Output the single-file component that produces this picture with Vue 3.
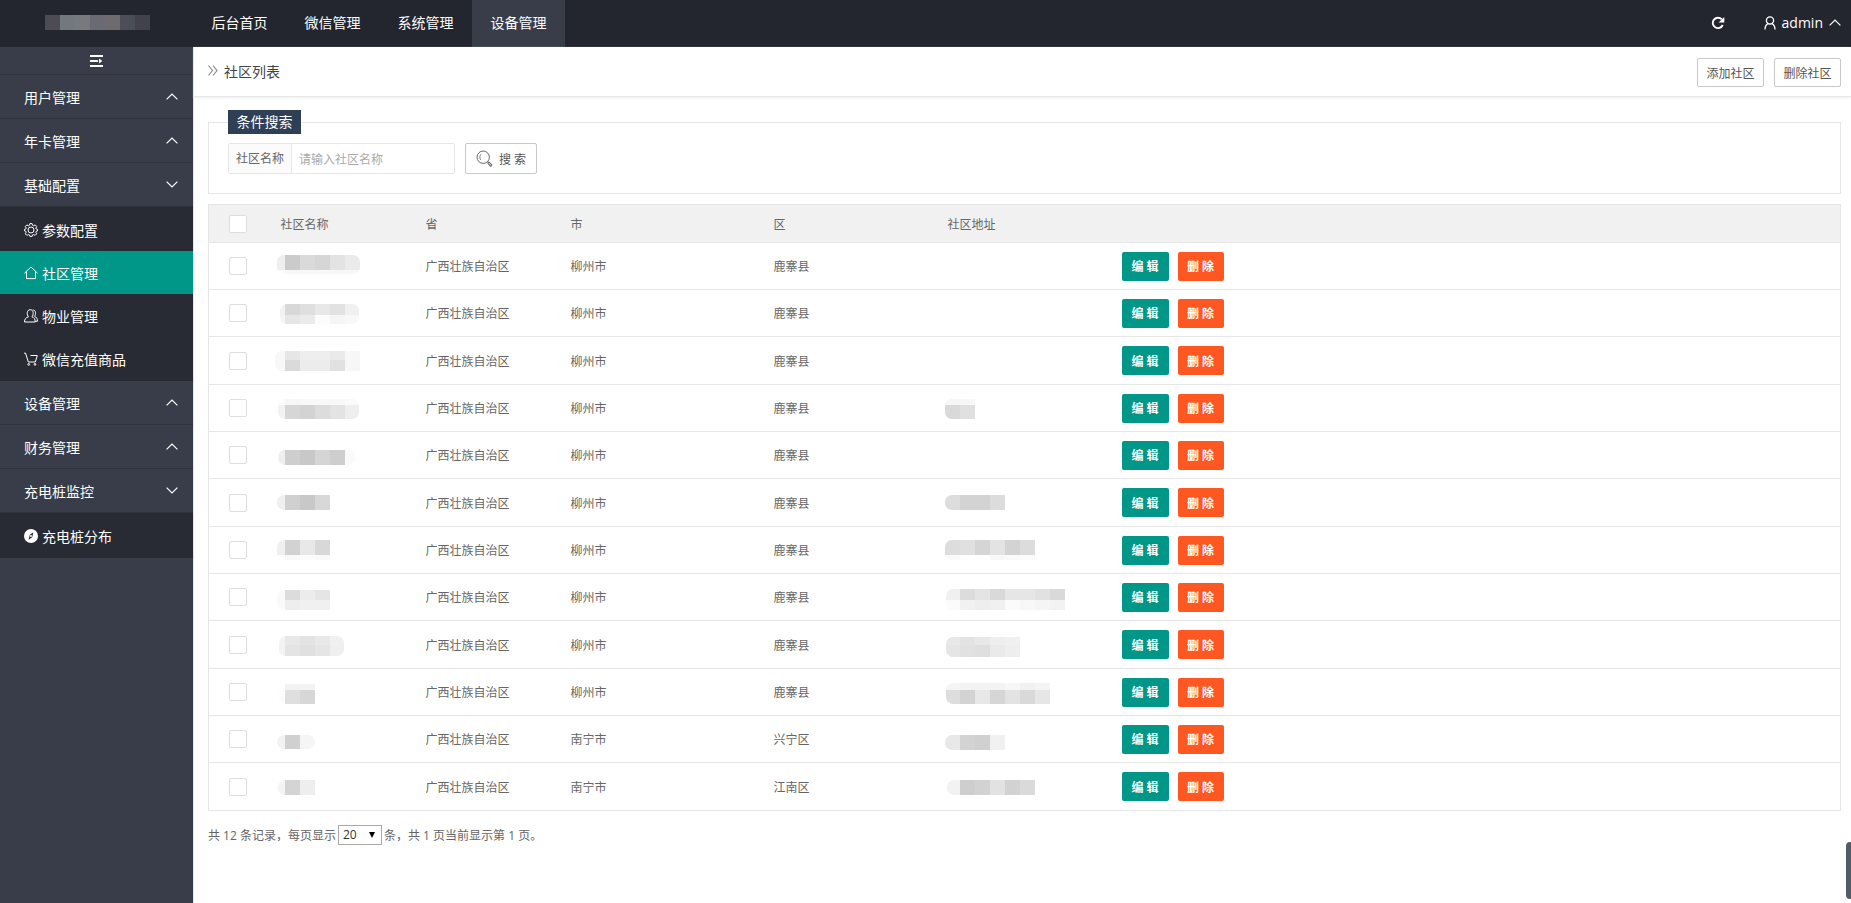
<script setup>
import { ref } from 'vue'

const tabs = ['后台首页', '微信管理', '系统管理', '设备管理']
const activeTab = ref(3)

const menu = [
  { title: '用户管理' },
  { title: '年卡管理' },
  {
    title: '基础配置',
    children: [
      { title: '参数配置', icon: 'gear' },
      { title: '社区管理', icon: 'home', active: true },
      { title: '物业管理', icon: 'users' },
      { title: '微信充值商品', icon: 'cart' }
    ]
  },
  { title: '设备管理' },
  { title: '财务管理' },
  { title: '充电桩监控', children: [{ title: '充电桩分布', icon: 'compass' }] }
]

const logoCells = ['#4d4c54', '#73777f', '#78797f', '#6a6a74', '#6e6a6e', '#4b4e58', '#42424c']

// A masked value: left edge, clip width, and bands of [top, bottom, grey levels per 15px cell]
const mask = (x, w, ...bands) => ({ x, w, top: bands[0][0], bottom: bands[bands.length - 1][1], bands })

const gx = '广西壮族自治区'
const rows = [
  { name: mask(10, 83, [12, 27, 'ef cb da d6 e3 eb'], [27, 31, 'fc f8 f8 f8 f8 f8']), city: '柳州市', area: '鹿寨县' },
  { name: mask(13, 79, [14, 25, 'f2 d8 df e8 e2 f0'], [25, 34, 'f5 e6 eb fc f5 f8']), city: '柳州市', area: '鹿寨县' },
  { name: mask(8, 100, [14, 23, 'f8 e6 ee ee ea f7'], [23, 34, 'f8 da ec ec e1 f7']), city: '柳州市', area: '鹿寨县' },
  { name: mask(11, 81, [14, 20, 'fc f7 f8 f8 f8 fa'], [20, 34, 'f2 d6 d3 dc e3 ee']), city: '柳州市', area: '鹿寨县', addr: mask(11, 60, [14, 20, 'f6 f7'], [20, 34, 'd9 e0']) },
  { name: mask(11, 77, [18, 33, 'ef ce c8 d5 ce fa']), city: '柳州市', area: '鹿寨县' },
  { name: mask(10, 83, [16, 31, 'f0 d0 c8 d8']), city: '柳州市', area: '鹿寨县', addr: mask(11, 90, [16, 31, 'dd d3 d3 dc']) },
  { name: mask(10, 83, [13, 28, 'f0 d2 e8 d8'], [28, 33, 'ff f9 fc f9']), city: '柳州市', area: '鹿寨县', addr: mask(11, 120, [13, 28, 'dd e0 d5 e3 d3 dc'], [28, 33, 'f9 fe fe f8 fa fc']) },
  { name: mask(10, 83, [16, 26, 'fa dc ec e5'], [26, 36, 'fa ee f0 f0']), city: '柳州市', area: '鹿寨县', addr: mask(12, 150, [15, 26, 'f0 dc e4 d9 e6 e6 e1 d9'], [26, 36, 'fb f1 ee f0 fb f8 f5 f2']) },
  { name: mask(12, 65, [15, 24, 'f3 e8 e3 e8 f0'], [24, 35, 'f3 e4 e0 e5 ef']), city: '柳州市', area: '鹿寨县', addr: mask(12, 110, [16, 24, 'e8 e3 e8 ee f0'], [24, 36, 'e5 e1 df ea ee']) },
  { name: mask(12, 70, [15, 21, 'ff f3 f3'], [21, 35, 'fc df d7']), city: '柳州市', area: '鹿寨县', addr: mask(12, 130, [14, 21, 'f5 f3 f3 f3 f7 f1 f4'], [21, 35, 'dd d3 e8 d6 e3 d9 e6']) },
  { name: mask(10, 38, [19, 33, 'f2 d0 f5']), city: '南宁市', area: '兴宁区', addr: mask(11, 90, [19, 34, 'e8 d3 d0 f1']) },
  { name: mask(11, 60, [17, 32, 'f4 d4 ee']), city: '南宁市', area: '江南区', addr: mask(13, 110, [17, 32, 'f2 ce d2 e2 d2 da']) }
]

function cellRects(m, gridStart) {
  return m.bands.flatMap(([y1, y2, levels]) =>
    levels.split(' ').map((g, i) => ({ x: gridStart + i * 15, y: y1, h: y2 - y1, fill: '#' + g + g + g }))
  )
}
</script>

<template>
  <div class="layout">
    <header class="topbar">
      <div class="logo">
        <svg width="105" height="15" aria-hidden="true">
          <rect v-for="(c, i) in logoCells" :key="i" :x="i * 15" y="0" width="15" height="15" :fill="c" />
        </svg>
      </div>
      <nav class="tabs">
        <a v-for="(t, i) in tabs" :key="t" href="#" :class="{ on: i === activeTab }" @click.prevent="activeTab = i">{{ t }}</a>
      </nav>
      <div class="tools">
        <button class="refresh" type="button" aria-label="刷新">
          <svg width="14" height="14" viewBox="0 0 14 14">
            <path d="M11.7 9A5.200 5.200 0 1 1 10.800 3.400" fill="none" stroke="#fff" stroke-width="1.900" />
            <path d="M13.300 1v5.600H7.700z" fill="#fff" />
          </svg>
        </button>
        <button class="user" type="button">
          <svg width="12" height="14" viewBox="0 0 12 14" fill="none" stroke="#fff" stroke-width="1.300">
            <circle cx="6" cy="4.400" r="3.600" />
            <path d="M1 13.400c0-3 1.200-4.900 3.100-5.800M11 13.400c0-3-1.200-4.900-3.100-5.800" />
          </svg>
          <span>admin</span>
          <svg width="12" height="7" viewBox="0 0 12 7" fill="none" stroke="#fff" stroke-width="1.200"><path d="M.6 6.400 6 1l5.400 5.400" /></svg>
        </button>
      </div>
    </header>

    <div class="body">
      <aside class="side">
        <button class="fold" type="button" aria-label="收起菜单">
          <svg width="13" height="12" viewBox="0 0 13 12" fill="#fff">
            <path d="M0 0h13v2H0zM0 5h8v2H0zM0 10h13v2H0zM9 3.400 12.400 6 9 8.600z" />
          </svg>
        </button>
        <ul class="menu">
          <li v-for="m in menu" :key="m.title">
            <a class="parent" href="#" @click.prevent>
              <span>{{ m.title }}</span>
              <svg width="12" height="7" viewBox="0 0 12 7" fill="none" stroke="#fff" stroke-width="1.200">
                <path :d="m.children ? 'M.6.6 6 6 11.400.6' : 'M.6 6.400 6 1l5.400 5.400'" />
              </svg>
            </a>
            <ul v-if="m.children" class="sub">
              <li v-for="c in m.children" :key="c.title">
                <a href="#" :class="{ current: c.active }" @click.prevent>
                  <svg width="14" height="14" viewBox="0 0 14 14" fill="none" stroke="#fff" stroke-width="1">
                    <template v-if="c.icon === 'gear'">
                      <path d="M5.900.6h2.200l.5 1.800.9.4 1.600-.9 1.600 1.600-.9 1.600.4.900 1.300.3v1.600l-1.300.4-.4.900.9 1.600-1.600 1.600-1.600-.9-.9.4-.5 1.500H5.900l-.5-1.500-.9-.4-1.600.9-1.600-1.600.9-1.600-.4-.9L.5 7.900V6.300l1.300-.3.4-.9-.9-1.600 1.600-1.600 1.600.9.900-.4z" />
                      <circle cx="7" cy="7" r="3" />
                    </template>
                    <path v-else-if="c.icon === 'home'" d="M.4 7.200 7 1l6.600 6.200M2.500 5.600v7h9v-7" />
                    <template v-else-if="c.icon === 'users'">
                      <path d="M4.500 7.800C2.500 6 2.700.7 6.200.7s3.700 5.300 1.700 7.100c2.300.8 3.300 2.200 3.300 5.200H.5c0-3 1.400-4.400 4-5.200z" />
                      <path d="M8.700 1c3.300-.2 3.600 4.300 1.800 6.300 2.100.9 3 2.300 3 5H11.200" />
                    </template>
                    <template v-else-if="c.icon === 'cart'">
                      <path d="M0 1.200h1.600L4.300 10h7L13.300 3.500H6.500" />
                      <circle cx="4.700" cy="12.400" r=".9" />
                      <circle cx="11" cy="12.400" r=".9" />
                    </template>
                    <template v-else>
                      <circle cx="7" cy="7" r="7" fill="#fff" stroke="none" />
                      <path d="M9.400 3.200 8.200 8.200 4.600 10.800 5.800 5.800z" fill="#282b33" stroke="none" />
                      <circle cx="7" cy="7" r="1" fill="#fff" stroke="none" />
                    </template>
                  </svg>
                  <span>{{ c.title }}</span>
                </a>
              </li>
            </ul>
          </li>
        </ul>
      </aside>

      <main class="main">
        <div class="titlebar">
          <h1>
            <svg width="10" height="11" viewBox="0 0 10 11" fill="none" stroke="#8c8c8c" stroke-width="1.200">
              <path d="M.5.500 4.500 5.500.5 10.500M5 .5l4 5-4 5" />
            </svg>
            <span>社区列表</span>
          </h1>
          <div class="actions">
            <button class="plain add" type="button">添加社区</button>
            <button class="plain add" type="button">删除社区</button>
          </div>
        </div>

        <div class="content">
          <form class="search" @submit.prevent>
            <h2>条件搜索</h2>
            <div class="fields">
              <div class="group">
                <label for="community">社区名称</label>
                <input id="community" type="text" placeholder="请输入社区名称" />
              </div>
              <button class="plain find" type="submit">
                <svg width="17" height="17" viewBox="0 0 17 17" fill="none" stroke="#666">
                  <circle cx="7.200" cy="7.200" r="6.200" />
                  <path d="M4.600 10C3.400 7.800 3.700 5.500 5 4.200" stroke-width=".8" />
                  <path d="M11.700 11.900 12.600 12.800" />
                  <path d="M12.900 13.100 14.800 15.200" stroke-width="2.800" stroke-linecap="round" />
                  <path d="M13 13.200 14.700 15.100" stroke="#fff" stroke-width=".9" stroke-linecap="round" />
                </svg>
                <span>搜 索</span>
              </button>
            </div>
          </form>

          <table class="list">
            <colgroup>
              <col class="c-check" /><col class="c-name" /><col class="c-name" /><col class="c-city" />
              <col class="c-area" /><col class="c-area" /><col />
            </colgroup>
            <thead>
              <tr>
                <th class="check"><input type="checkbox" aria-label="全选" /></th>
                <th>社区名称</th>
                <th>省</th>
                <th>市</th>
                <th>区</th>
                <th>社区地址</th>
                <th></th>
              </tr>
            </thead>
            <tbody>
              <tr v-for="(r, i) in rows" :key="i">
                <td class="check"><input type="checkbox" aria-label="选择" /></td>
                <td class="masked">
                  <svg width="140" height="40">
                    <clipPath :id="'n' + i"><rect :x="r.name.x" :y="r.name.top" :width="r.name.w" :height="r.name.bottom - r.name.top" rx="7" /></clipPath>
                    <g :clip-path="`url(#n${i})`">
                      <rect v-for="(c, k) in cellRects(r.name, 3)" :key="k" :x="c.x" :y="c.y" width="15" :height="c.h" :fill="c.fill" />
                    </g>
                  </svg>
                </td>
                <td>{{ gx }}</td>
                <td>{{ r.city }}</td>
                <td>{{ r.area }}</td>
                <td class="masked">
                  <svg v-if="r.addr" width="160" height="40">
                    <clipPath :id="'a' + i"><rect :x="r.addr.x" :y="r.addr.top" :width="r.addr.w" :height="r.addr.bottom - r.addr.top" rx="7" /></clipPath>
                    <g :clip-path="`url(#a${i})`">
                      <rect v-for="(c, k) in cellRects(r.addr, 11)" :key="k" :x="c.x" :y="c.y" width="15" :height="c.h" :fill="c.fill" />
                    </g>
                  </svg>
                </td>
                <td>
                  <div class="ops">
                    <button class="edit" type="button">编 辑</button>
                    <button class="del" type="button">删 除</button>
                  </div>
                </td>
              </tr>
            </tbody>
          </table>

          <div class="pager">
            <label for="size">共 12 条记录，每页显示</label>
            <span class="size">
              <select id="size">
                <option>20</option>
                <option>50</option>
                <option>100</option>
              </select>
              <svg width="6" height="6" viewBox="0 0 6 6" aria-hidden="true"><path d="M0 0h6L3 6z" fill="#000" /></svg>
            </span>
            <span>条，共 1 页当前显示第 1 页。</span>
          </div>
        </div>
      </main>
    </div>
    <div class="dock"></div>
  </div>
</template>

<style>
html,
body {
  margin: 0;
  background: #fff;
}
</style>

<style scoped>
.layout {
  min-height: 100vh;
  display: flex;
  flex-direction: column;
  font-family: "Open Sans", "Noto Sans CJK SC", sans-serif;
  font-size: 12px;
  color: #666;
}
ul {
  list-style: none;
  margin: 0;
  padding: 0;
}
a {
  color: inherit;
  text-decoration: none;
}
button,
input,
select {
  font: inherit;
  color: inherit;
  box-sizing: border-box;
}
button {
  cursor: pointer;
  padding: 0;
  border: 0;
  background: none;
}
svg {
  display: block;
  flex: none;
}

.topbar {
  display: flex;
  height: 47px;
  background: #23262e;
  color: #fff;
  font-size: 14px;
}
.logo {
  width: 193px;
  box-sizing: border-box;
  padding: 15px 0 0 45px;
}
.tabs {
  display: flex;
  flex: 1;
}
.tabs a {
  min-width: 93px;
  text-align: center;
  line-height: 46px;
}
.tabs a.on {
  background: #393d49;
}
.tools {
  display: flex;
  align-items: center;
  gap: 39px;
  padding: 0 10px 2px 0;
}
.user {
  display: flex;
  align-items: center;
  gap: 6px;
}

.body {
  flex: 1;
  display: flex;
}
.side {
  width: 193px;
  flex: none;
  background: #393d49;
  color: #fff;
  font-size: 14px;
}
.fold {
  display: flex;
  justify-content: center;
  align-items: center;
  width: 100%;
  height: 28px;
  border-bottom: 1px solid #31343c;
}
.parent {
  display: flex;
  align-items: center;
  justify-content: space-between;
  box-sizing: border-box;
  height: 44px;
  padding: 0 15px 0 24px;
  border-bottom: 1px solid #31343c;
}
.sub {
  padding: 1px 0;
  background: #282b33;
}
.sub a {
  display: flex;
  align-items: center;
  gap: 4px;
  height: 43px;
  padding-left: 24px;
}
.sub a.current {
  background: #009688;
}

.main {
  flex: 1;
  min-width: 0;
  border-left: 1px solid #e2e2e6;
}
.titlebar {
  display: flex;
  align-items: center;
  justify-content: space-between;
  height: 49px;
  padding: 0 10px 0 14px;
  border-bottom: 1px solid #e8e8e8;
  box-shadow: 0 1px 2px #eee;
}
h1 {
  display: flex;
  align-items: center;
  gap: 6px;
  margin: 0;
  padding-bottom: 2px;
  font-size: 14px;
  font-weight: 400;
  color: #444;
}
.actions {
  display: flex;
  gap: 10px;
  padding-top: 2px;
}
.plain {
  height: 29px;
  border: 1px solid #c9c9c9;
  border-radius: 2px;
  background: #fff;
  color: #555;
}
.add {
  width: 67px;
}
.content {
  padding: 25px 10px 0 14px;
}
.search {
  border: 1px solid #e6e6e6;
  padding: 0 19px 19px;
  margin-bottom: 10px;
}
h2 {
  width: 73px;
  height: 24px;
  margin: -13px 0 9px;
  background: #2f4056;
  color: #fff;
  font-size: 14px;
  font-weight: 400;
  line-height: 24px;
  text-align: center;
}
.fields {
  display: flex;
  gap: 10px;
}
.group {
  display: flex;
  height: 31px;
  width: 227px;
  box-sizing: border-box;
  border: 1px solid #e6e6e6;
  border-radius: 2px;
}
.group label {
  padding: 0 7px;
  line-height: 30px;
  background: #fbfbfb;
  border-right: 1px solid #e6e6e6;
}
.group input {
  flex: 1;
  min-width: 0;
  border: 0;
  padding: 2px 7px 0;
  background: none;
  outline: none;
}
.group input::placeholder {
  color: #aaa;
}
.find {
  display: flex;
  align-items: center;
  gap: 6px;
  height: 31px;
  padding: 0 10px;
}

.list {
  width: 100%;
  table-layout: fixed;
  border-collapse: collapse;
  border: 1px solid #e6e6e6;
}
.c-check {
  width: 58px;
}
.c-name {
  width: 145px;
}
.c-city {
  width: 203px;
}
.c-area {
  width: 174px;
}
.list th,
.list td {
  box-sizing: border-box;
  height: 47px;
  padding: 0 14px;
  border-bottom: 1px solid #e6e6e6;
  text-align: left;
  font-weight: 400;
}
.list tr:nth-child(3n) td {
  height: 48px;
}
.list th {
  height: 38px;
  background: #f1f1f1;
}
.list .check {
  padding: 0 0 0 20px;
}
.list .masked {
  padding: 0;
  vertical-align: top;
}
.check input {
  appearance: none;
  display: block;
  width: 18px;
  height: 18px;
  margin: 0;
  border: 1px solid #dedede;
  border-radius: 2px;
  background: #fff;
}
.check input:checked {
  background: #009688;
}
.ops {
  display: flex;
  gap: 9px;
}
.edit,
.del {
  height: 29px;
  border-radius: 2px;
  color: #fff;
  font-weight: 700;
}
.edit {
  width: 47px;
  background: #009688;
}
.del {
  width: 46px;
  background: #ff5722;
}

.pager {
  display: flex;
  align-items: center;
  gap: 2px;
  margin-top: 14px;
}
.size {
  position: relative;
}
.size select {
  appearance: none;
  display: block;
  width: 44px;
  height: 20px;
  padding: 0 4px;
  border: 1px solid #a9a9a9;
  border-radius: 0;
  background: #fff;
  color: #333;
  line-height: 18px;
}
.size svg {
  position: absolute;
  right: 7px;
  top: 7px;
  pointer-events: none;
}
.dock {
  position: fixed;
  right: 0;
  bottom: 4px;
  width: 5px;
  height: 57px;
  border-radius: 4px 0 0 4px;
  background: #545b68;
}
</style>
